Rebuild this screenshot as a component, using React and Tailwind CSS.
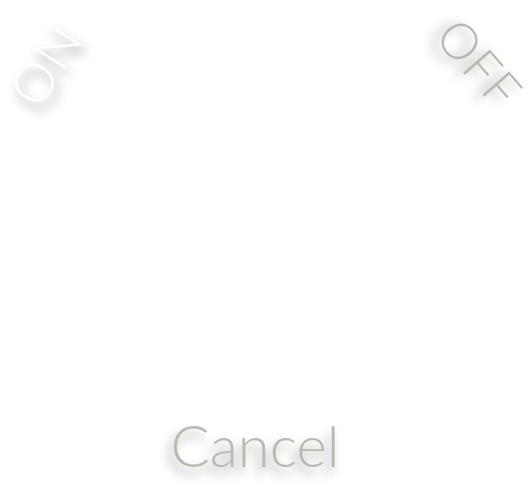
export default function App() {
  const shadow = '[text-shadow:-4px_7px_11px_rgba(0,0,0,0.4)]';
  return (
    <div className="relative flex h-[486px] w-[528px] flex-col items-center justify-end overflow-hidden bg-white pb-[12px] font-['Lato','Liberation_Sans',sans-serif] font-light">
      <div className={`absolute left-[45px] top-[64px] -translate-x-1/2 -translate-y-1/2 rotate-[-58deg] whitespace-nowrap text-[54px] leading-none tracking-[1px] text-white ${shadow}`}>
        ON
      </div>
      <div className={`absolute left-[480px] top-[63px] -translate-x-1/2 -translate-y-1/2 rotate-[49deg] whitespace-nowrap text-[50px] leading-none tracking-[1px] text-[#b9b9b1] ${shadow}`}>
        OFF
      </div>
      <button className={`mr-[18px] text-[58px] leading-none text-[#b9b9b1] ${shadow}`}>
        Cancel
      </button>
    </div>
  );
}
